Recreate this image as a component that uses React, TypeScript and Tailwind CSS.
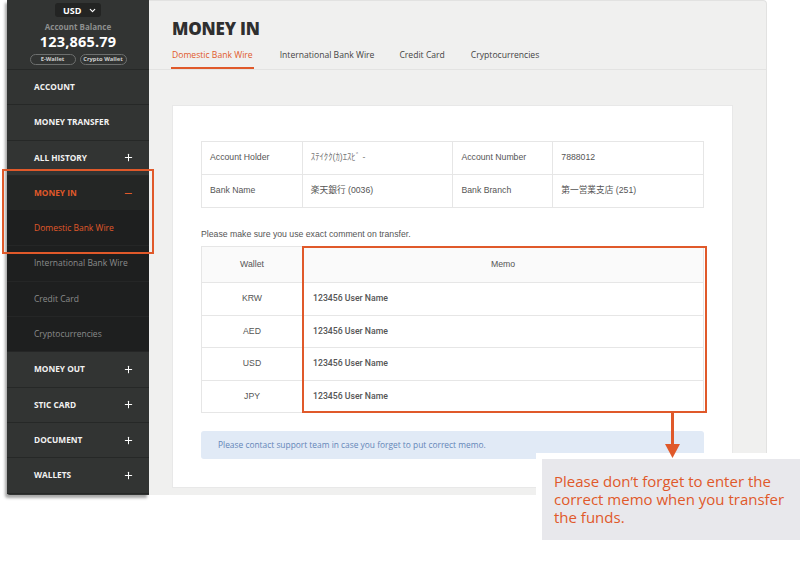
import { ChevronDown, Plus, Minus } from "lucide-react"

const POP = { fontFamily: '"Open Sans", "Noto Sans", sans-serif' }

type NavItem = { label: string; kind: "main" | "sub"; icon?: "plus" | "minus"; active?: boolean }

const nav: NavItem[] = [
  { label: "ACCOUNT", kind: "main" },
  { label: "MONEY TRANSFER", kind: "main" },
  { label: "ALL HISTORY", kind: "main", icon: "plus" },
  { label: "MONEY IN", kind: "main", icon: "minus", active: true },
  { label: "Domestic Bank Wire", kind: "sub", active: true },
  { label: "International Bank Wire", kind: "sub" },
  { label: "Credit Card", kind: "sub" },
  { label: "Cryptocurrencies", kind: "sub" },
  { label: "MONEY OUT", kind: "main", icon: "plus" },
  { label: "STIC CARD", kind: "main", icon: "plus" },
  { label: "DOCUMENT", kind: "main", icon: "plus" },
  { label: "WALLETS", kind: "main", icon: "plus" },
]

function Sidebar() {
  return (
    <aside className="w-[142px] shrink-0 bg-[#323433] flex flex-col shadow-[-2px_3px_3px_rgba(0,0,0,0.35)] rounded-bl-[3px]" style={POP}>
      <div className="h-[70px] flex flex-col items-center border-b border-[#262827]">
        <div className="mt-[3px] w-[46px] h-[14px] bg-[#232423] rounded-[3px] flex items-center justify-between pl-[8px] pr-[4px]">
          <span className="text-[9px] font-bold text-white leading-none">USD</span>
          <ChevronDown size={9} strokeWidth={3} className="text-white" />
        </div>
        <div className="mt-[6px] text-[8px] font-bold text-[#8d8f8e] leading-none">Account Balance</div>
        <div className="mt-[4px] text-[14.5px] font-bold text-white leading-none tracking-[0.2px]">123,865.79</div>
        <div className="mt-[4px] flex gap-[4px]">
          <span className="h-[11px] w-[46px] rounded-full border border-[#6d6f6e] text-[5.8px] font-bold text-[#cfcfcf] flex items-center justify-center">E-Wallet</span>
          <span className="h-[11px] w-[47px] rounded-full border border-[#6d6f6e] text-[5.8px] font-bold text-[#cfcfcf] flex items-center justify-center">Crypto Wallet</span>
        </div>
      </div>
      {nav.map((n) => {
        const bg = n.kind === "sub" ? "bg-[#1e1f1f] border-[#252626]" : n.active ? "bg-[#242625] border-[#1e1f1f]" : "bg-[#323433] border-[#262827]"
        const color = n.active ? "text-[#e0592a]" : n.kind === "sub" ? "text-[#8a8b8b]" : "text-[#f2f2f2]"
        return (
          <div key={n.label} className={`h-[35.3px] border-b flex items-center justify-between pl-[27px] pr-[15px] ${bg}`}>
            <span className={`${n.kind === "main" ? "text-[8.3px] font-bold" : "text-[8.5px]"} ${color}`}>{n.label}</span>
            {n.icon === "plus" && <Plus size={11} strokeWidth={2.2} className="text-white" />}
            {n.icon === "minus" && <Minus size={11} strokeWidth={2.2} className="text-[#e0592a]" />}
          </div>
        )
      })}
    </aside>
  )
}

const cell = "border border-[#e6e6e6] px-[8px] text-[8.7px] text-[#555]"

function InfoTable() {
  return (
    <table className="w-[503px] border-collapse" style={{ fontFamily: '"Liberation Sans", "Noto Sans CJK JP", sans-serif' }}>
      <tbody>
        <tr className="h-[33px]">
          <td className={`${cell} w-[101px]`}>Account Holder</td>
          <td className={`${cell} w-[151px] text-[7px] text-[#777]`}>ｽﾃｲｸｸ(ｶ)ｴｽﾋﾞ -</td>
          <td className={`${cell} w-[100px]`}>Account Number</td>
          <td className={`${cell} w-[151px]`}>7888012</td>
        </tr>
        <tr className="h-[33px]">
          <td className={cell}>Bank Name</td>
          <td className={cell}>楽天銀行 (0036)</td>
          <td className={cell}>Bank Branch</td>
          <td className={cell}>第一営業支店 (251)</td>
        </tr>
      </tbody>
    </table>
  )
}

function MemoTable() {
  const rows = ["KRW", "AED", "USD", "JPY"]
  return (
    <table className="w-[503px] border-collapse" style={{ fontFamily: '"Liberation Sans", sans-serif' }}>
      <thead>
        <tr className="h-[36px] bg-[#fafafa]">
          <th className={`${cell} w-[101px] font-normal text-center`}>Wallet</th>
          <th className={`${cell} font-normal text-center`}>Memo</th>
        </tr>
      </thead>
      <tbody>
        {rows.map((r) => (
          <tr key={r} className="h-[32.5px]">
            <td className={`${cell} text-center`}>{r}</td>
            <td className={`${cell} pl-[10px] font-medium text-[#4a4a4a]`} style={{ fontFamily: 'Roboto, "Liberation Sans", sans-serif' }}>
              123456 User Name
            </td>
          </tr>
        ))}
      </tbody>
    </table>
  )
}

function Main() {
  return (
    <main className="flex-1 bg-[#f0f0ef] border-t border-r border-[#e2e2e1] rounded-tr-[4px] flex flex-col">
      <div className="h-[69px] border-b border-[#e3e3e2] pl-[23px] flex flex-col" style={POP}>
        <h1 className="mt-[19px] text-[17px] font-extrabold text-[#2f2f2f] leading-none tracking-[-0.2px]">MONEY IN</h1>
        <div className="mt-[12px] flex text-[8.6px] text-[#444]">
          <span className="text-[#e0592a] border-b-2 border-[#e0592a] pb-[5px] px-[1px] -ml-[1px]">Domestic Bank Wire</span>
          <span className="ml-[26px]">International Bank Wire</span>
          <span className="ml-[25px]">Credit Card</span>
          <span className="ml-[26px]">Cryptocurrencies</span>
        </div>
      </div>
      <div className="mt-[35px] ml-[23px] w-[561px] h-[383px] bg-white border border-[#e8e8e8] pl-[28px] pt-[35px]">
        <InfoTable />
        <p className="mt-[20px] text-[8.7px] text-[#555]" style={{ fontFamily: '"Liberation Sans", sans-serif' }}>
          Please make sure you use exact comment on transfer.
        </p>
        <div className="mt-[5px]">
          <MemoTable />
        </div>
        <div className="mt-[18px] w-[503px] h-[28px] bg-[#e1eaf6] rounded-[3px] flex items-center pl-[17px] text-[8.4px] text-[#6486b8]" style={POP}>
          Please contact support team in case you forget to put correct memo.
        </div>
      </div>
    </main>
  )
}

export default function App() {
  return (
    <div className="relative w-[800px] h-[567px] bg-white overflow-hidden">
      <div className="ml-[7px] w-[760px] h-[495px] flex">
        <Sidebar />
        <Main />
      </div>

      {/* annotations */}
      <div className="absolute left-[2px] top-[169px] w-[152px] h-[85px] border-2 border-[#e0592a]" />
      <div className="absolute left-[302px] top-[246px] w-[405px] h-[167px] border-2 border-[#e0592a]" />
      <div className="absolute left-[536px] top-[453px] w-[264px] h-[114px] bg-white" />
      <div className="absolute left-[671px] top-[413px] w-[3px] h-[34px] bg-[#e0592a]" />
      <svg className="absolute left-[665px] top-[444px]" width="15" height="15" viewBox="0 0 15 15">
        <polygon points="0,0 15,0 7.5,14" fill="#e0592a" />
      </svg>
      <div className="absolute left-[542px] top-[459px] w-[258px] h-[81px] bg-[#e8e8ec] pl-[12px] pr-[3px] pt-[13px] text-[15px] leading-[18px] text-[#e0592a]" style={POP}>
        Please don’t forget to enter the correct memo when you transfer the funds.
      </div>
    </div>
  )
}
